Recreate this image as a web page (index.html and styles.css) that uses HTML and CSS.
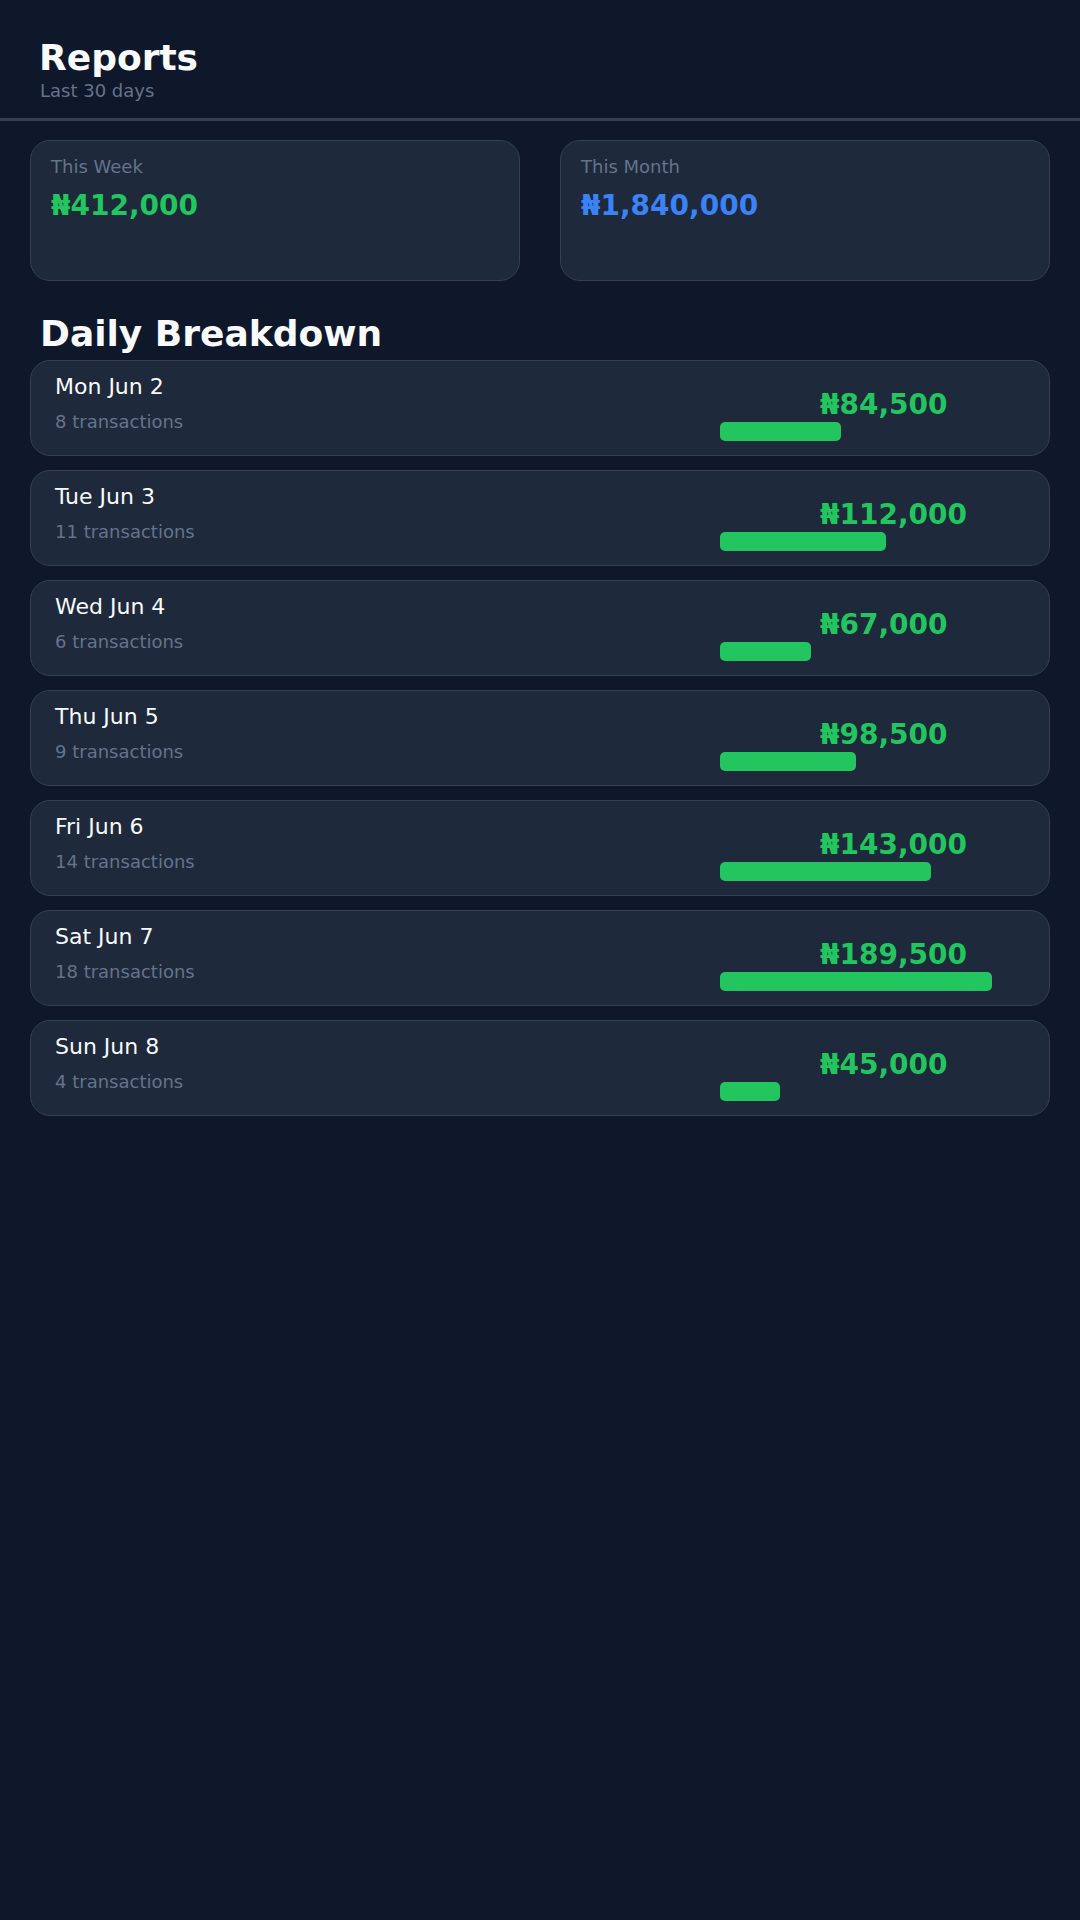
FILE: index.html
```html
<!DOCTYPE html>
<html lang="en">
<head>
    <meta charset="UTF-8">
    <meta name="viewport" content="width=device-width, initial-scale=1.0">
    <title>Reports</title>
    <link rel="stylesheet" href="styles.css">
</head>
<body>
    <div class="header">
        <h1>Reports</h1>
        <p class="subtitle">Last 30 days</p>
    </div>

    <div class="content">
        <div class="summary">
            <div class="card">
                <div class="card-label">This Week</div>
                <div class="card-value green">₦412,000</div>
            </div>
            <div class="card">
                <div class="card-label">This Month</div>
                <div class="card-value blue">₦1,840,000</div>
            </div>
        </div>

        <h2>Daily Breakdown</h2>

        <div class="days">
            <div class="day">
                <div class="day-info">
                    <div class="day-name">Mon Jun 2</div>
                    <div class="day-count">8 transactions</div>
                </div>
                <div class="day-right">
                    <div class="day-amount">₦84,500</div>
                    <div class="bar-track"><div class="bar" style="width: 40%"></div></div>
                </div>
            </div>
            <div class="day">
                <div class="day-info">
                    <div class="day-name">Tue Jun 3</div>
                    <div class="day-count">11 transactions</div>
                </div>
                <div class="day-right">
                    <div class="day-amount">₦112,000</div>
                    <div class="bar-track"><div class="bar" style="width: 55%"></div></div>
                </div>
            </div>
            <div class="day">
                <div class="day-info">
                    <div class="day-name">Wed Jun 4</div>
                    <div class="day-count">6 transactions</div>
                </div>
                <div class="day-right">
                    <div class="day-amount">₦67,000</div>
                    <div class="bar-track"><div class="bar" style="width: 30%"></div></div>
                </div>
            </div>
            <div class="day">
                <div class="day-info">
                    <div class="day-name">Thu Jun 5</div>
                    <div class="day-count">9 transactions</div>
                </div>
                <div class="day-right">
                    <div class="day-amount">₦98,500</div>
                    <div class="bar-track"><div class="bar" style="width: 45%"></div></div>
                </div>
            </div>
            <div class="day">
                <div class="day-info">
                    <div class="day-name">Fri Jun 6</div>
                    <div class="day-count">14 transactions</div>
                </div>
                <div class="day-right">
                    <div class="day-amount">₦143,000</div>
                    <div class="bar-track"><div class="bar" style="width: 70%"></div></div>
                </div>
            </div>
            <div class="day">
                <div class="day-info">
                    <div class="day-name">Sat Jun 7</div>
                    <div class="day-count">18 transactions</div>
                </div>
                <div class="day-right">
                    <div class="day-amount">₦189,500</div>
                    <div class="bar-track"><div class="bar" style="width: 90%"></div></div>
                </div>
            </div>
            <div class="day">
                <div class="day-info">
                    <div class="day-name">Sun Jun 8</div>
                    <div class="day-count">4 transactions</div>
                </div>
                <div class="day-right">
                    <div class="day-amount">₦45,000</div>
                    <div class="bar-track"><div class="bar" style="width: 20%"></div></div>
                </div>
            </div>
        </div>
    </div>
</body>
</html>
```

FILE: styles.css
```css
body {
    font-family: 'DejaVu Sans', 'Noto Sans', sans-serif;
    background: #0f172a;
    color: #f8fafc;
    margin: 0;
    min-height: 1920px;
}
.header {
    padding: 37px 40px 17px 39px;
    border-bottom: 3px solid #334155;
}
h1 {
    font-size: 36px;
    font-weight: bold;
    margin: 0;
}
.subtitle {
    font-size: 18px;
    color: #64748b;
    margin: 2px 0 0 1px;
}
.content {
    padding: 19px 30px 0 30px;
}
.summary {
    display: grid;
    grid-template-columns: 1fr 1fr;
    gap: 40px;
}
.card {
    background: #1e293b;
    border: 1px solid #334155;
    border-radius: 20px;
    height: 141px;
    box-sizing: border-box;
    padding: 15px 20px;
}
.card-label {
    font-size: 18px;
    color: #64748b;
}
.card-value {
    font-size: 28px;
    font-weight: bold;
    margin-top: 12px;
}
.green {
    color: #22c55e;
}
.blue {
    color: #3b82f6;
}
h2 {
    font-size: 36px;
    font-weight: bold;
    margin: 32px 0 6px 10px;
}
.days {
    display: flex;
    flex-direction: column;
    gap: 14px;
}
.day {
    display: flex;
    justify-content: space-between;
    align-items: flex-start;
    height: 96px;
    box-sizing: border-box;
    padding: 13px 27px 0 24px;
    background: #1e293b;
    border: 1px solid #334155;
    border-radius: 20px;
}
.day-name {
    font-size: 22px;
}
.day-count {
    font-size: 18px;
    color: #64748b;
    margin-top: 12px;
}
.day-right {
    width: 302px;
    margin-top: 14px;
}
.day-amount {
    font-size: 28px;
    font-weight: bold;
    color: #22c55e;
    margin-left: 100px;
}
.bar-track {
    height: 19px;
    margin-top: 1px;
}
.bar {
    height: 100%;
    background: #22c55e;
    border-radius: 5px;
}
```
